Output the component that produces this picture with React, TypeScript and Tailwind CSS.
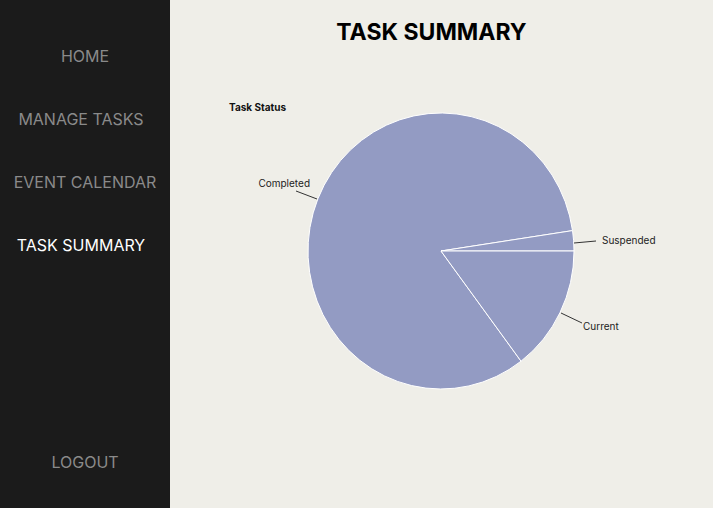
const CX = 271
const CY = 161
const RX = 133
const RY = 138

function pt(deg: number) {
  const a = (deg * Math.PI) / 180
  return [CX + RX * Math.cos(a), CY + RY * Math.sin(a)] as const
}

function TaskStatusChart() {
  const [sx, sy] = pt(-8.5)
  const [ex, ey] = pt(0)
  const [cx2, cy2] = pt(53)
  const fill = '#939bc3'
  return (
    <svg width={543} height={340} className="block" style={{ fontFamily: 'Inter, sans-serif' }}>
      <text x={59} y={21} fontSize={10} fontWeight={700} fill="#111">
        Task Status
      </text>
      <path d={`M${CX},${CY} L${cx2},${cy2} A${RX},${RY} 0 1 1 ${sx},${sy} Z`} fill={fill} stroke="#fff" strokeWidth={1} />
      <path d={`M${CX},${CY} L${ex},${ey} A${RX},${RY} 0 0 0 ${sx},${sy} Z`} fill={fill} stroke="#fff" strokeWidth={1} />
      <path d={`M${CX},${CY} L${ex},${ey} A${RX},${RY} 0 0 1 ${cx2},${cy2} Z`} fill={fill} stroke="#fff" strokeWidth={1} />

      <line x1={147} y1={109} x2={126} y2={101} stroke="#333" strokeWidth={1} />
      <text x={140} y={97} fontSize={10} textAnchor="end" fill="#222">
        Completed
      </text>

      <line x1={404} y1={153} x2={426} y2={151} stroke="#333" strokeWidth={1} />
      <text x={432} y={154} fontSize={10} fill="#222">
        Suspended
      </text>

      <line x1={391} y1={223} x2={412} y2={233} stroke="#333" strokeWidth={1} />
      <text x={413} y={240} fontSize={10} fill="#222">
        Current
      </text>
    </svg>
  )
}

export default function App() {
  const nav = ['HOME', 'MANAGE TASKS', 'EVENT CALENDAR', 'TASK SUMMARY']
  return (
    <div className="flex h-[508px] w-[713px] overflow-hidden font-['Inter',sans-serif]">
      <aside className="flex w-[170px] shrink-0 flex-col bg-[#1b1b1b] pt-[44px] pb-[34px]">
        <nav className="flex flex-col gap-[39px]">
          {nav.map((item) => (
            <a
              key={item}
              className={`text-center text-[16px] leading-6 ${
                item === 'TASK SUMMARY' ? 'pr-2 text-white' : item === 'MANAGE TASKS' ? 'pr-2 text-[#8a8a8a]' : 'text-[#8a8a8a]'
              }`}
            >
              {item}
            </a>
          ))}
        </nav>
        <a className="mt-auto text-center text-[16px] leading-6 text-[#8a8a8a]">LOGOUT</a>
      </aside>
      <main className="flex flex-1 flex-col bg-[#efeee8]">
        <h1 className="pt-[17px] pr-5 text-center text-[23px] leading-[30px] font-bold text-black">TASK SUMMARY</h1>
        <div className="mt-[43px]">
          <TaskStatusChart />
        </div>
      </main>
    </div>
  )
}
